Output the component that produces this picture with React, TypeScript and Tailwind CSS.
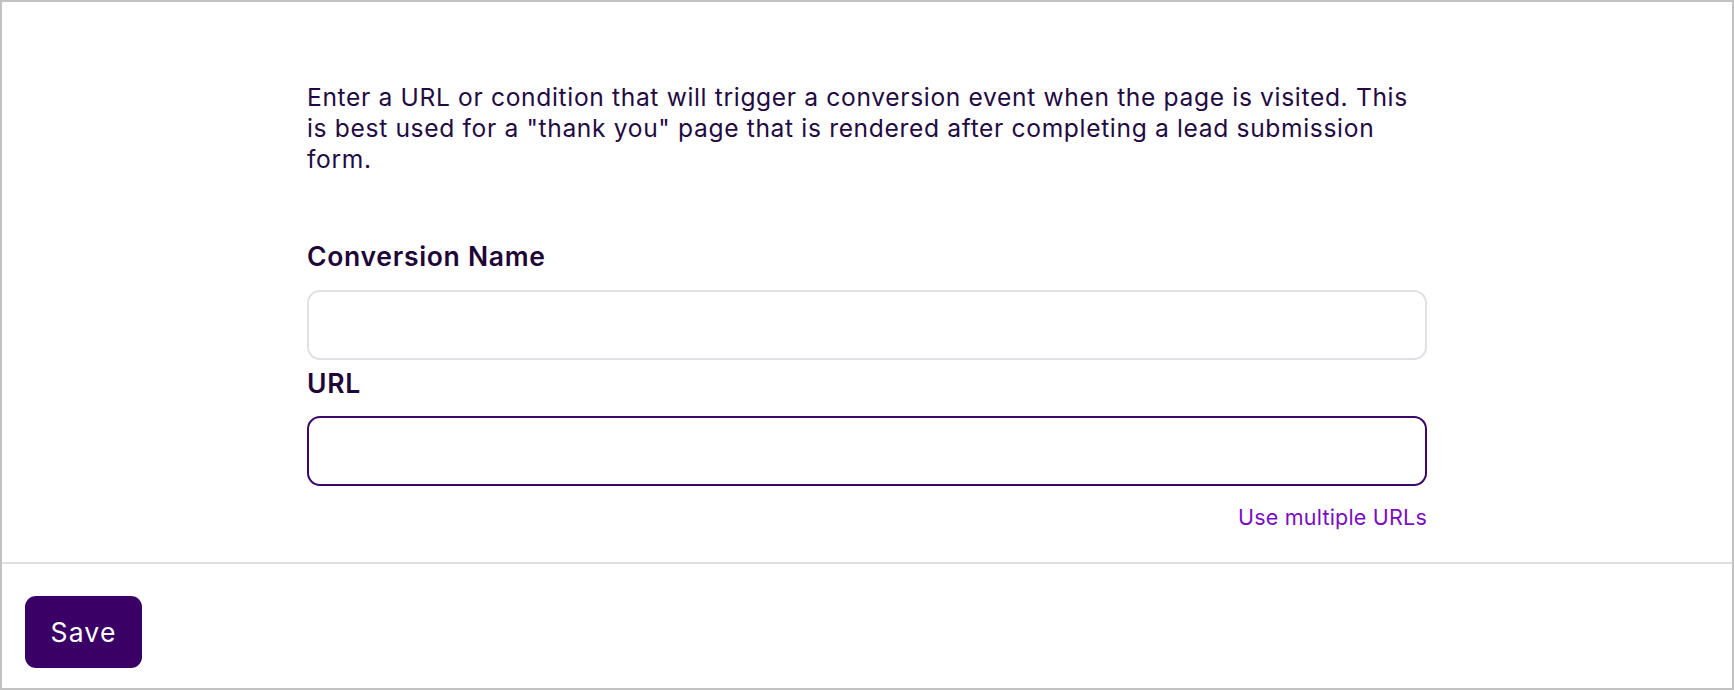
import React from "react";

export default function App() {
  return (
    <div
      className="w-[1734px] h-[690px] border-2 border-[#c2c2c2] bg-white flex flex-col text-[#240a42]"
      style={{ fontFamily: "Inter, 'Noto Sans', sans-serif" }}
    >
      <div className="flex-1 pt-[80px]">
        <div className="w-[1120px] mx-auto flex flex-col">
          <p className="text-[24.6px] leading-[31px] tracking-[0.65px] text-[#240a42] pr-[8px]">
            Enter a URL or condition that will trigger a conversion event when the page is visited. This is best used for a "thank you" page that is rendered after completing a lead submission form.
          </p>
          <label className="mt-[65px] text-[26.5px] leading-[32px] tracking-[0.7px] font-semibold text-[#1f0638]">
            Conversion Name
          </label>
          <input
            type="text"
            className="mt-[18px] h-[70px] w-full rounded-[13px] border-2 border-[#e1e0e5] bg-white outline-none"
          />
          <label className="mt-[7px] text-[26.5px] leading-[32px] tracking-[0.7px] font-semibold text-[#1f0638]">
            URL
          </label>
          <input
            type="text"
            className="mt-[17px] h-[70px] w-full rounded-[13px] border-2 border-[#3a0868] bg-white outline-none"
          />
          <div className="mt-[17px] flex justify-end">
            <a className="text-[21.5px] leading-[28px] tracking-[0.2px] text-[#7a0cc2] cursor-pointer">Use multiple URLs</a>
          </div>
        </div>
      </div>
      <div className="h-[126px] border-t-2 border-[#dfdee3] pt-[32px] pl-[23px]">
        <button className="w-[117px] h-[72px] rounded-[11px] bg-[#3b0066] text-white text-[26.5px] leading-[32px] tracking-[1.2px]">
          Save
        </button>
      </div>
    </div>
  );
}
